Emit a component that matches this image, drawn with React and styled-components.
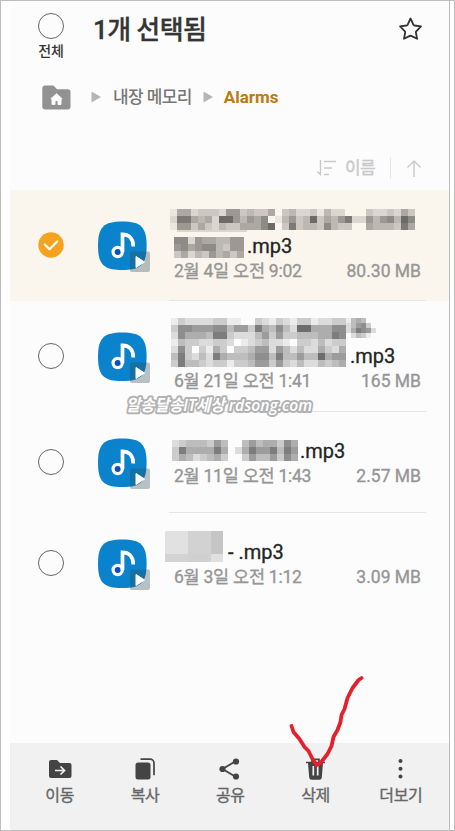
import React from "react";
import styled, { createGlobalStyle } from "styled-components";

const Global = createGlobalStyle`
  * { box-sizing: border-box; }
  body { margin: 0; background: #fff; font-family: Roboto, "Noto Sans CJK KR", sans-serif; }
`;

const Frame = styled.div`
  position: relative;
  width: 455px;
  height: 831px;
  padding-left: 9px;
  border: 1px solid #bdbdbd;
  background: #fff;
  overflow: hidden;
`;

const Screen = styled.main`
  display: flex;
  flex-direction: column;
  width: 440px;
  height: 829px;
  background: #fcfcfc;
  border-right: 1px solid #bdbdbd;
`;

const Header = styled.header`
  display: flex;
  height: 72px;
  padding: 12px 25px 0 28px;
`;

const SelectAll = styled.div`
  display: flex;
  flex-direction: column;
  align-items: center;
  width: 26px;
  white-space: nowrap;
  font-size: 14px;
  font-weight: 500;
  line-height: 20px;
  letter-spacing: -0.1px;
  color: #353535;
  gap: 2px;
`;

const Circle = styled.div`
  width: 26px;
  height: 26px;
  flex: none;
  border: 1px solid #666;
  border-radius: 50%;
`;

const Title = styled.h1`
  flex: 1;
  margin: 1px 0 0 29px;
  font-size: 26px;
  font-weight: 500;
  line-height: 32px;
  letter-spacing: -0.6px;
  white-space: pre;
  color: #353535;
  -webkit-text-stroke: 0.3px #353535;
`;

const StarIcon = styled.svg`
  width: 26px;
  height: 26px;
  margin-top: 3px;
`;

const Breadcrumb = styled.nav`
  display: flex;
  align-items: center;
  height: 48px;
  padding-left: 32px;
`;

const Arrow = styled.svg`
  width: 10px;
  height: 12px;
  margin-left: ${(p) => p.$gap}px;
`;

const Crumb = styled.span`
  margin-left: ${(p) => p.$gap}px;
  font-size: 17px;
  line-height: 24px;
  font-weight: ${(p) => (p.$active ? 700 : 500)};
  letter-spacing: ${(p) => (p.$active ? 0 : -0.6)}px;
  color: ${(p) => (p.$active ? "#bd7a0c" : "#777")};
  white-space: nowrap;
`;

const SortBar = styled.div`
  display: flex;
  align-items: center;
  justify-content: flex-end;
  height: 69px;
  padding: 25px 27px 0 0;
  font-size: 17px;
  line-height: 24px;
  color: #c8c8c8;
`;

const SortLabel = styled.span`
  margin: 0 15px 0 9px;
  letter-spacing: -0.6px;
  -webkit-text-stroke: 0.4px #c8c8c8;
`;

const SortRule = styled.span`
  width: 1px;
  height: 20px;
  margin-right: 15px;
  background: #e5e5e5;
`;

const Row = styled.section`
  display: flex;
  height: ${(p) => p.$height}px;
  background: ${(p) => (p.$selected ? "#fbf6ed" : "transparent")};
`;

const Marker = styled.div`
  width: 88px;
  padding: ${(p) => p.$top + 11}px 0 0 28px;
`;

const Thumb = styled.svg`
  flex: none;
  width: 53px;
  height: 52px;
  margin-top: ${(p) => p.$top}px;
`;

const Details = styled.div`
  display: flex;
  flex-direction: column;
  justify-content: flex-end;
  width: 257px;
  margin-left: 18px;
  padding-bottom: ${(p) => p.$bottom}px;
  border-bottom: 1px solid ${(p) => (p.$last ? "transparent" : "#e6e5e3")};
`;

const NameLine = styled.div`
  display: flex;
  align-items: flex-end;
  padding: 0 0 ${(p) => p.$lift}px ${(p) => p.$indent}px;
`;

const FileName = styled.span`
  font-size: 20px;
  line-height: 24px;
  height: 20px;
  margin: 0 0 ${(p) => p.$raise || 0}px ${(p) => p.$gap || 0}px;
  color: #252525;
  -webkit-text-stroke: 0.3px #252525;
  white-space: pre;
`;

const Meta = styled.div`
  display: flex;
  justify-content: space-between;
  height: 24px;
  padding: 0 5px;
  font-size: 17.5px;
  line-height: 24px;
  color: #969696;
  -webkit-text-stroke: 0.35px #969696;
  white-space: pre;
`;

const MetaDate = styled.span`
  letter-spacing: -0.25px;
`;

const MosaicGrid = styled.div`
  display: grid;
  flex: none;
  grid-template-columns: repeat(${(p) => p.$cols}, ${(p) => p.$cell}px);
  grid-auto-rows: ${(p) => p.$cell}px;
  width: max-content;
  max-height: ${(p) => p.$max || 999}px;
  margin: 0 0 ${(p) => p.$after || 0}px ${(p) => p.$indent || 0}px;
  overflow: hidden;
`;

const MosaicCell = styled.i`
  background: rgba(35, 35, 35, ${(p) => p.$level * 0.073});
`;

const Redaction = styled.div`
  display: grid;
  grid-template: 23px 8px / 23px 23px 12px;
  margin: 0 0 -2px -4px;
`;

const Block = styled.i`
  background: ${(p) => p.$tone};
`;

const Tail = styled.div`
  display: flex;
  flex-direction: column;
  justify-content: space-between;
  height: 49px;
`;

const Spacer = styled.div`
  flex: 1;
`;

const Footer = styled.footer`
  display: grid;
  grid-template-columns: repeat(5, 85.3px);
  height: 87px;
  padding: 13px 0 0 7px;
  background: #f1f1f1;
`;

const Action = styled.div`
  display: flex;
  flex-direction: column;
  align-items: center;
  gap: 3px;
  font-size: 16px;
  line-height: 22px;
  letter-spacing: -0.4px;
  color: #666;
  -webkit-text-stroke: 0.35px #666;
`;

const ActionIcon = styled.svg`
  width: 26px;
  height: 26px;
`;

const Watermark = styled.svg`
  position: absolute;
  left: 118px;
  top: 389px;
  width: 204px;
  height: 30px;
  font: italic 600 16.5px "Open Sans", "Noto Sans CJK KR", sans-serif;
`;

const RedCheck = styled.svg`
  position: absolute;
  left: 278px;
  top: 664px;
  width: 90px;
  height: 110px;
`;

const patterns = {
  first: [
    "15523332663433503422314220003223253",
    "28854529964657014634935468226467497",
    "16635324335557903834437433005444385",
    "02222222222000000000000000000000000",
  ],
  firstEnd: ["7726554466", "6756774366", "3524364535"],
  second: [
    "1322223311003213213312233",
    "3776667746638547429955577",
    "2755548832224636334445587",
    "1433223320123422103324233",
    "2730315303346626424225325",
    "4832428544457748446449566",
    "3844323313346636324224345",
  ],
  secondEnd: ["145400", "246730", "258762", "024310"],
  third: ["234443640046455375", "385555850258668486", "354234530036446375"],
};

function Mosaic({ name, cell = 7, ...rest }) {
  const rows = patterns[name];
  return (
    <MosaicGrid $cols={rows[0].length} $cell={cell} {...rest}>
      {rows.join("").split("").map((n, i) => (
        <MosaicCell key={i} $level={Number(n)} />
      ))}
    </MosaicGrid>
  );
}

function MusicThumb({ top }) {
  return (
    <Thumb $top={top} viewBox="0 0 53 52">
      <path d="M24.3.4C43 .4 48.6 6 48.6 24.7S43 49 24.3 49 0 43.400 0 24.700 5.600.4 24.300.4Z" fill="#0a83cc" />
      <circle cx="19.700" cy="31" r="4.600" fill="#0b4fbd" stroke="#fff" strokeWidth="3.200" />
      <path d="M24.500 31V13.300C30.500 13.300 35.300 17 35.300 25.500" fill="none" stroke="#fff" strokeWidth="3.700" />
      <rect x="32" y="30.500" width="20" height="20.500" rx="2" fill="#334b59" fillOpacity=".34" />
      <path d="M38 35.500 46.500 41 38 46.500Z" fill="#fff" stroke="#fff" strokeLinejoin="round" />
    </Thumb>
  );
}

function CheckedMark() {
  return (
    <svg width="26" height="26" viewBox="0 0 26 26" display="block">
      <circle cx="13" cy="13" r="12.700" fill="#f5a31f" />
      <path d="m6.800 12.500 4.700 4.700 7.700-7.700" fill="none" stroke="#fff" strokeWidth="2.200" strokeLinecap="round" strokeLinejoin="round" />
    </svg>
  );
}

function FileRow({ height, top, bottom, selected, last, date, size, children }) {
  return (
    <Row $height={height} $selected={selected}>
      <Marker $top={top}>{selected ? <CheckedMark /> : <Circle />}</Marker>
      <MusicThumb top={top} />
      <Details $bottom={bottom} $last={last}>
        {children}
        <Meta>
          <MetaDate>{date}</MetaDate>
          <span>{size}</span>
        </Meta>
      </Details>
    </Row>
  );
}

const TriangleArrow = ({ gap }) => (
  <Arrow $gap={gap} viewBox="0 0 10 12">
    <path d="M.5.500 10 6 .5 11.500Z" fill="#b5b5b5" />
  </Arrow>
);

export default function App() {
  return (
    <>
      <Global />
      <Frame>
        <Screen>
          <Header>
            <SelectAll>
              <Circle />
              <span>전체</span>
            </SelectAll>
            <Title>1개 선택됨</Title>
            <StarIcon viewBox="0 0 26 26">
              <path d="m12.500 2.500 3 6.300c.2.400.5.600.9.700l6.600.900-4.800 5c-.3.300-.4.700-.3 1.100l1.200 6.300-5.900-2.900c-.4-.2-.9-.2-1.300 0L6 22.800l1.200-6.300c.1-.4 0-.8-.3-1.100l-4.800-5 6.600-.9c.4-.1.700-.3.900-.7Z" fill="none" stroke="#333" strokeWidth="1.800" strokeLinejoin="round" />
            </StarIcon>
          </Header>
          <Breadcrumb>
            <svg width="29" height="25" viewBox="0 0 29 25">
              <path d="M3 .5h8.500L15 4.300h10.500a3 3 0 0 1 3 3V21.500a3 3 0 0 1-3 3H3.300a3 3 0 0 1-3-3V3.500a3 3 0 0 1 2.700-3Z" fill="#929292" />
              <path d="m14.500 8.700 5.500 5-1 1v4.800h-3v-4h-3v4h-3v-4.800l-1-1Z" fill="#fcfcfc" stroke="#fcfcfc" strokeLinejoin="round" />
            </svg>
            <TriangleArrow gap={20} />
            <Crumb $gap={12}>내장 메모리</Crumb>
            <TriangleArrow gap={11} />
            <Crumb $gap={11} $active>Alarms</Crumb>
          </Breadcrumb>
          <SortBar>
            <svg width="19" height="16" viewBox="0 0 19 16" fill="none" stroke="#c8c8c8" strokeWidth="1.400">
              <path d="M3.500 0v14.500L.3 11.500M7 1.500h12M7 8h8M7 14.500h5" />
            </svg>
            <SortLabel>이름</SortLabel>
            <SortRule />
            <svg width="16" height="17" viewBox="0 0 16 17" fill="none" stroke="#c8c8c8" strokeWidth="1.400">
              <path d="M8 17V1M1.500 7.500 8 1l6.500 6.500" />
            </svg>
          </SortBar>

          <FileRow height={111} top={31} bottom={17} selected date="2월 4일 오전 9:02" size="80.30 MB">
            <Mosaic name="first" $max={23} $indent={1} $after={2} />
            <NameLine $indent={5} $lift={1}>
              <Mosaic name="firstEnd" />
              <FileName $gap={3} $raise={4}>.mp3</FileName>
            </NameLine>
          </FileRow>
          <FileRow height={111} top={31} bottom={18} date="6월 21일 오전 1:41" size="165 MB">
            <NameLine $indent={2} $lift={2}>
              <Mosaic name="second" />
              <Tail>
                <Mosaic name="secondEnd" cell={5} />
                <FileName $gap={4} $raise={3}>.mp3</FileName>
              </Tail>
            </NameLine>
          </FileRow>
          <FileRow height={101} top={26} bottom={24} date="2월 11일 오전 1:43" size="2.57 MB">
            <NameLine $indent={3} $lift={3}>
              <Mosaic name="third" />
              <FileName $gap={2} $raise={2}>.mp3</FileName>
            </NameLine>
          </FileRow>
          <FileRow height={100} top={26} bottom={23} last date="6월 3일 오전 1:12" size="3.09 MB">
            <NameLine $indent={0} $lift={5}>
              <Redaction>
                <Block $tone="#e1e1e1" />
                <Block $tone="#d2d2d2" />
                <Block $tone="#c5c5c5" />
                <Block $tone="#d3d3d3" />
                <Block $tone="#d0d0d0" />
                <Block $tone="#e0e0e0" />
              </Redaction>
              <FileName $gap={5}>- .mp3</FileName>
            </NameLine>
          </FileRow>
          <Spacer />

          <Footer>
            <Action>
              <ActionIcon viewBox="0 0 26 26">
                <path d="M4 4h6l3 3h9.500a2 2 0 0 1 2 2v11a2 2 0 0 1-2 2H4a2 2 0 0 1-2-2V6a2 2 0 0 1 2-2Z" fill="#444" />
                <path d="M8 14.500h9M13.500 10.500l4 4-4 4" fill="none" stroke="#f1f1f1" strokeWidth="1.700" />
              </ActionIcon>
              이동
            </Action>
            <Action>
              <ActionIcon viewBox="0 0 26 26">
                <rect x="3.500" y="6.500" width="15" height="17" rx="2.500" fill="#444" />
                <path d="M8.500 3.200h9.500a4 4 0 0 1 4 4v12" fill="none" stroke="#444" strokeWidth="1.700" />
              </ActionIcon>
              복사
            </Action>
            <Action>
              <ActionIcon viewBox="0 0 26 26" fill="#444">
                <path d="M19 5 5.500 13 19 21" fill="none" stroke="#444" strokeWidth="1.800" />
                <circle cx="19" cy="5.500" r="3.100" />
                <circle cx="5.500" cy="13" r="3.100" />
                <circle cx="19" cy="20.500" r="3.100" />
              </ActionIcon>
              공유
            </Action>
            <Action>
              <ActionIcon viewBox="0 0 26 26">
                <path d="M3 6.500h19M9 6V3.300h7V6" fill="none" stroke="#444" strokeWidth="1.700" />
                <path d="M5 7h15l-1.200 14.500a2.500 2.500 0 0 1-2.500 2.300H8.700a2.500 2.500 0 0 1-2.500-2.300Z" fill="#444" />
                <path d="M10.300 10v9.500M14.700 10v9.500" stroke="#f1f1f1" strokeWidth="1.700" />
              </ActionIcon>
              삭제
            </Action>
            <Action>
              <ActionIcon viewBox="0 0 26 26" fill="#444">
                <circle cx="12.500" cy="5" r="2" />
                <circle cx="12.500" cy="12.700" r="2" />
                <circle cx="12.500" cy="20.500" r="2" />
              </ActionIcon>
              더보기
            </Action>
          </Footer>
        </Screen>

        <Watermark viewBox="0 0 204 30">
          <text x="7" y="20.500" textLength="186" lengthAdjust="spacingAndGlyphs" fill="#fff" stroke="#b2b2b2" strokeWidth="4" strokeLinejoin="round" paintOrder="stroke">
            알송달송IT세상 rdsong.com
          </text>
        </Watermark>
        <RedCheck viewBox="279.500 665 90 110">
          <path d="m292 726 2 6 6 7 5 8 4 4 4 8 4 6 4-2 7-9 4-8 2-9 4-7 3-8 1-7 3-6 3-11 5-10 6-8 3-2" fill="none" stroke="#e3202b" strokeWidth="3.800" strokeLinecap="round" strokeLinejoin="round" />
        </RedCheck>
      </Frame>
    </>
  );
}
